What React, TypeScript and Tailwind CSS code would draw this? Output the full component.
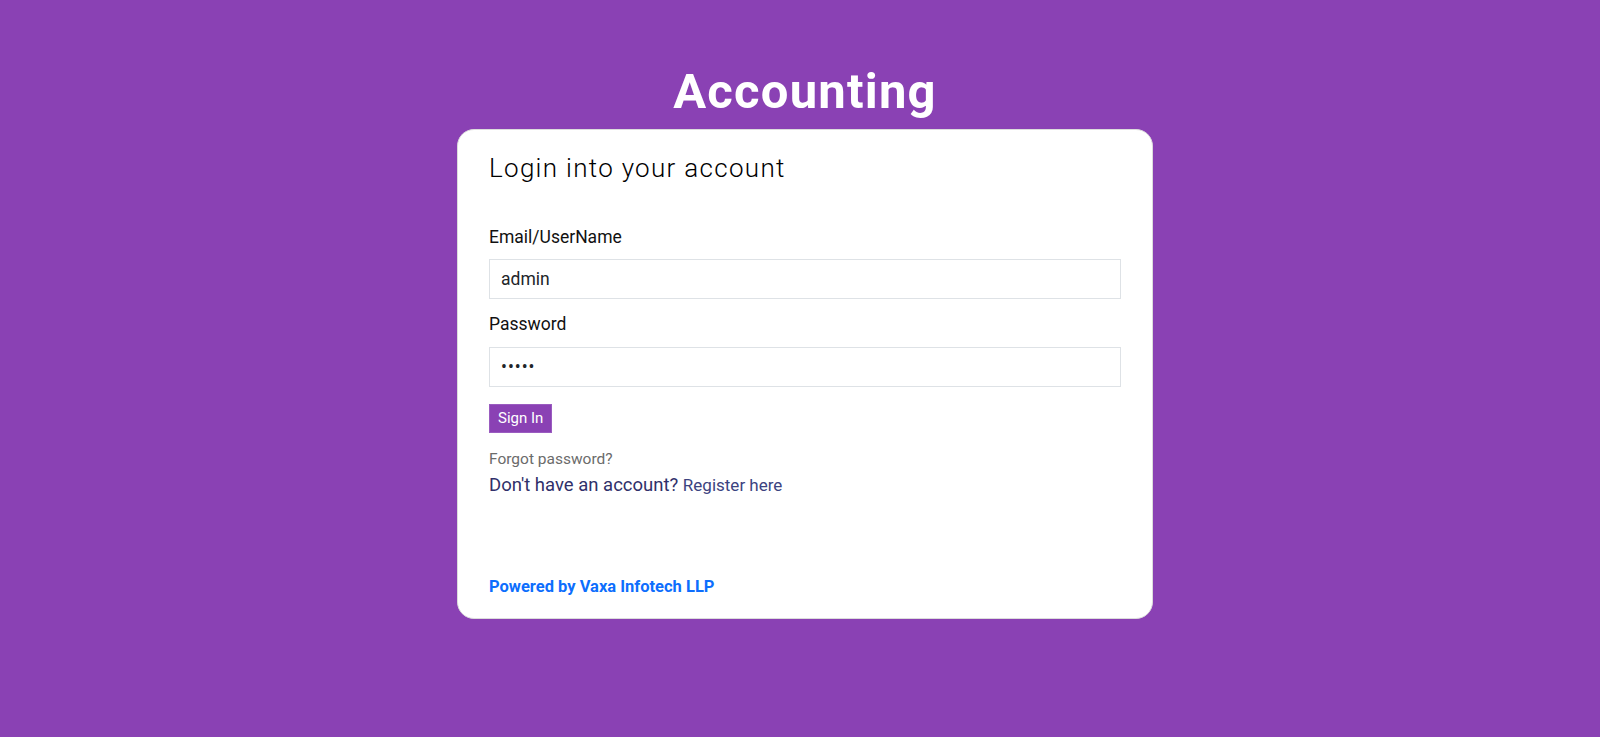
import { useState } from 'react';

export default function App() {
  const [email, setEmail] = useState('admin');
  const [password, setPassword] = useState('admin');

  return (
    <div className="min-h-screen w-full bg-[#8a41b4] font-['Roboto',sans-serif]">
      <div className="flex flex-col items-center pt-[63px] pl-[10px]">
        <h1 className="text-[49px] leading-[58px] font-bold tracking-[1.2px] text-white">Accounting</h1>

        {/* Login card */}
        <div className="mt-[8px] w-[696px] h-[490px] rounded-[17px] border border-[#dcdcdc] bg-white px-[31px] pt-[22px] pb-[19px] flex flex-col">
          <h2 className="text-[26px] leading-[32px] font-light tracking-[1.3px] text-black">Login into your account</h2>

          <label className="mt-[41px] mb-[10px] block text-[17.5px] leading-[24px] text-[#111]">Email/UserName</label>
          <input
            className="h-[40px] w-full border border-[#dee2e6] bg-white px-[11px] text-[17.5px] text-[#212529] outline-none"
            value={email}
            onChange={(e) => setEmail(e.target.value)}
          />

          <label className="mt-[13px] mb-[11px] block text-[17.5px] leading-[24px] text-[#111]">Password</label>
          <input
            type="password"
            className="h-[40px] w-full border border-[#dee2e6] bg-white px-[11px] text-[17.5px] tracking-[1px] text-[#212529] outline-none"
            value={password}
            onChange={(e) => setPassword(e.target.value)}
          />

          <div className="mt-[17px]">
            <button className="h-[29px] px-[8px] bg-[#8a41b4] border border-[#9a5cc0] text-[15px] leading-[27px] text-white">Sign In</button>
          </div>

          <a className="mt-[14px] text-[15.5px] leading-[24px] text-[#6b6b6b]">Forgot password?</a>
          <p className="text-[18.5px] leading-[28px] text-[#30306a]">
            Don't have an account? <a className="text-[17px] text-[#3c4380]">Register here</a>
          </p>

          <p className="mt-auto text-[16.5px] leading-[24px] font-bold text-[#0d6efd]">Powered by Vaxa Infotech LLP</p>
        </div>
      </div>
    </div>
  );
}
